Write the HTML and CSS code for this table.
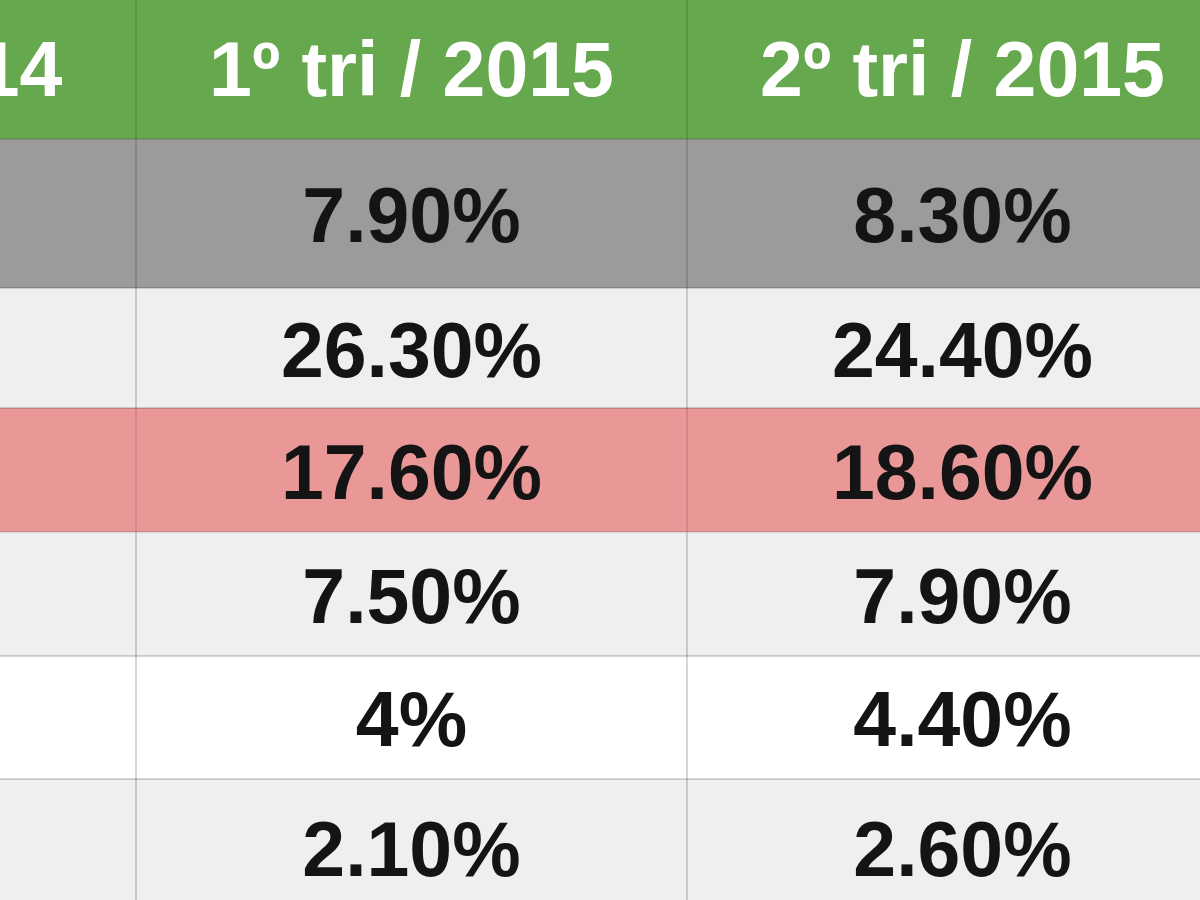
FILE: index.html
```html
<!DOCTYPE html>
<html lang="pt">
<head>
<meta charset="utf-8">
<title>Tabela</title>
<link rel="stylesheet" href="styles.css">
</head>
<body>
<div class="viewport">
  <table class="rates">
    <colgroup>
      <col class="c1"><col class="c2"><col class="c3">
    </colgroup>
    <thead>
      <tr class="head">
        <th>4º tri / 2014</th>
        <th>1º tri / 2015</th>
        <th>2º tri / 2015</th>
      </tr>
    </thead>
    <tbody>
      <tr class="gray r1"><td>6.50%</td><td>7.90%</td><td>8.30%</td></tr>
      <tr class="light r2"><td>24.80%</td><td>26.30%</td><td>24.40%</td></tr>
      <tr class="pink r3"><td>16.40%</td><td>17.60%</td><td>18.60%</td></tr>
      <tr class="light r4"><td>6.80%</td><td>7.50%</td><td>7.90%</td></tr>
      <tr class="white r5"><td>3.80%</td><td>4%</td><td>4.40%</td></tr>
      <tr class="light r6"><td>1.90%</td><td>2.10%</td><td>2.60%</td></tr>
    </tbody>
  </table>
</div>
</body>
</html>
```
FILE: styles.css
```css
html, body {
  margin: 0;
  padding: 0;
  background: #efefef;
}
.viewport {
  width: 1200px;
  height: 900px;
  overflow: hidden;
}
.rates {
  margin-left: -415px;
  border-collapse: collapse;
  table-layout: fixed;
  width: 1652px;
  font-family: "Liberation Sans", Arial, sans-serif;
  font-weight: bold;
  font-size: 77px;
}
.c1, .c2, .c3 { width: 551px; }
.rates th, .rates td {
  padding: 0;
  text-align: center;
  vertical-align: middle;
  border: 2px solid rgba(0, 0, 0, 0.16);
  line-height: 1;
}
.rates th:first-child, .rates td:first-child { border-left: 0; }
.head th {
  background: #66a84e;
  color: #ffffff;
  height: 138px;
  border-top: 0;
  border-color: rgba(0, 0, 0, 0.12);
}
.rates td { color: #141414; padding-top: 4px; }
.gray td { background: #9b9b9b; border-color: rgba(0, 0, 0, 0.14); }
.light td { background: #efefef; }
.pink td { background: #e99797; border-color: rgba(0, 0, 0, 0.1); }
.white td { background: #ffffff; }
.r1 td { height: 143px; }
.r2 td { height: 114px; }
.r3 td { height: 118px; }
.r4 td { height: 118px; }
.r5 td { height: 117px; }
.r6 td { height: 130px; }
```
